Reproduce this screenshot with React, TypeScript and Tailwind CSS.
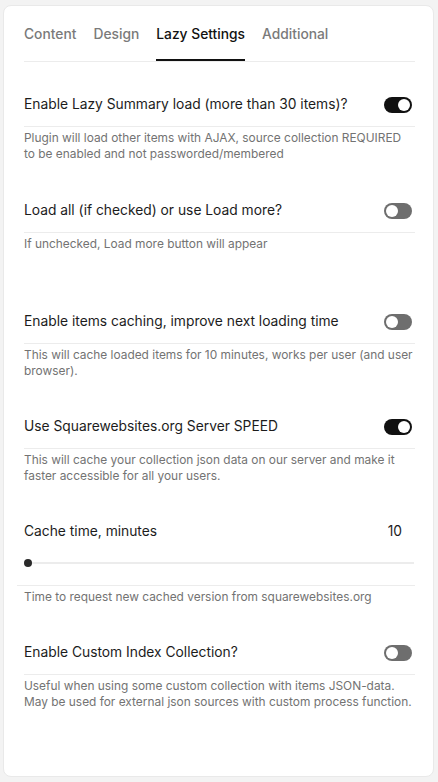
import React from "react";

function Toggle({ on }: { on: boolean }) {
  return (
    <div
      className={
        "relative h-[16px] w-[28px] rounded-full " +
        (on ? "bg-[#111111]" : "bg-[#6e6e6e]")
      }
    >
      <div
        className={
          "absolute top-[2px] h-[12px] w-[12px] rounded-full bg-white " +
          (on ? "left-[14px]" : "left-[2px]")
        }
      />
    </div>
  );
}

function Row({
  label,
  desc,
  on,
  extra = "",
}: {
  label: string;
  desc: string[];
  on: boolean;
  extra?: string;
}) {
  return (
    <div className={extra}>
      <div className="flex h-[45px] items-center justify-between border-b border-[#ececec] pt-[1px]">
        <span className="text-[13.8px] text-[#1c1c1c]">{label}</span>
        <div className="mr-[3px]">
          <Toggle on={on} />
        </div>
      </div>
      <div className="pt-[3px] text-[11.9px] leading-[16px] text-[#737373]">
        {desc.map((d, i) => (
          <div key={i}>{d}</div>
        ))}
      </div>
    </div>
  );
}

export default function App() {
  return (
    <div
      className="min-h-[782px] w-[438px] bg-[#f3f3f3] pl-[3px] pr-[4px] pt-[5px] pb-[5px]"
      style={{ fontFamily: "Inter, 'Noto Sans', sans-serif" }}
    >
      <div className="h-[772px] rounded-[8px] border border-[#e9e9e9] bg-white pl-[20px] pr-[18px]">
        <div className="flex h-[56px] items-end gap-[17px] border-b border-[#ececec] pb-0">
          {["Content", "Design", "Lazy Settings", "Additional"].map((t) => (
            <div
              key={t}
              className={
                "flex h-[54px] items-center border-b-2 pt-[2px] text-[13.8px] font-medium " +
                (t === "Lazy Settings"
                  ? "border-[#111111] text-[#111111]"
                  : "border-transparent text-[#7a7a7a]")
              }
            >
              {t}
            </div>
          ))}
        </div>

        <div className="pt-[20px]">
          <Row
            label="Enable Lazy Summary load (more than 30 items)?"
            desc={[
              "Plugin will load other items with AJAX, source collection REQUIRED",
              "to be enabled and not passworded/membered",
            ]}
            on={true}
          />
          <Row
            label="Load all (if checked) or use Load more?"
            desc={["If unchecked, Load more button will appear"]}
            on={false}
            extra="mt-[26px]"
          />
          <Row
            label="Enable items caching, improve next loading time"
            desc={[
              "This will cache loaded items for 10 minutes, works per user (and user",
              "browser).",
            ]}
            on={false}
            extra="mt-[47px]"
          />
          <Row
            label="Use Squarewebsites.org Server SPEED"
            desc={[
              "This will cache your collection json data on our server and make it",
              "faster accessible for all your users.",
            ]}
            on={true}
            extra="mt-[25px]"
          />

          <div className="mt-[25px]">
            <div className="flex h-[44px] items-center justify-between pt-[1px]">
              <span className="text-[13.8px] text-[#1c1c1c]">Cache time, minutes</span>
              <span className="mr-[13px] text-[13.8px] text-[#1c1c1c]">10</span>
            </div>
            <div className="relative -ml-[7px] h-[33px] border-b border-[#ececec]">
              <div className="absolute left-[8px] right-[1px] top-[9px] h-[2px] bg-[#ececec]" />
              <div className="absolute left-[7px] top-[6px] h-[8px] w-[8px] rounded-full bg-[#2a2a2a]" />
            </div>
            <div className="pt-[3px] text-[11.9px] leading-[16px] text-[#737373]">
              Time to request new cached version from squarewebsites.org
            </div>
          </div>

          <Row
            label="Enable Custom Index Collection?"
            desc={[
              "Useful when using some custom collection with items JSON-data.",
              "May be used for external json sources with custom process function.",
            ]}
            on={false}
            extra="mt-[25px]"
          />
        </div>
      </div>
    </div>
  );
}
